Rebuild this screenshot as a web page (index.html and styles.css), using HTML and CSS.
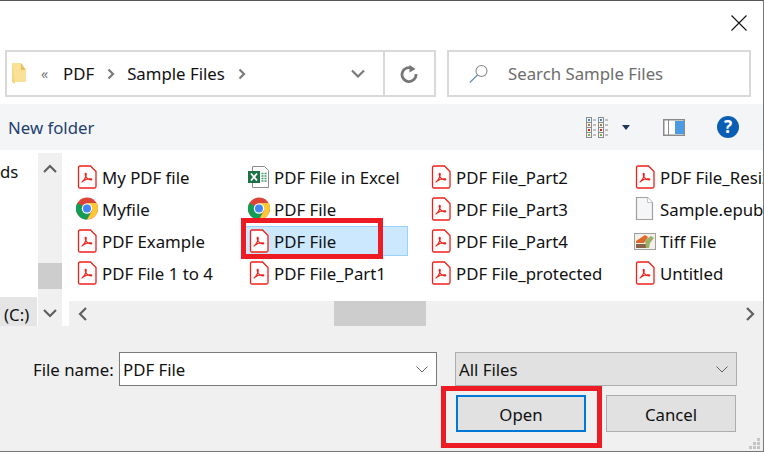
FILE: index.html
```html
<!DOCTYPE html>
<html>
<head>
    <title>Open file</title>
    <link rel="stylesheet" href="styles.css">
</head>
<body>
    <svg class="defs" width="0" height="0">
        <symbol id="pdf" viewBox="0 0 24 24">
            <path d="M4 1h10.500L20 6.500V21.500a1.500 1.500 0 0 1-1.500 1.500H4a1.500 1.500 0 0 1-1.500-1.500v-19A1.500 1.500 0 0 1 4 1z" fill="#fff" stroke="#f0201a" stroke-width="1.300"/>
            <path d="M6 17c1.800-1 3.200-3.500 4-6 .5-1.700.2-2.900-.5-2.700-.7.200-.3 2.500 1 4.200 1.100 1.400 2.600 2.300 4.200 2.400 1.300.1 1.500-.8.500-1-1.800-.4-5.500.4-7.700 1.800-.9.600-1.800 1.600-1.500 1.300z" fill="none" stroke="#f0201a" stroke-width="1.100"/>
        </symbol>
        <symbol id="chrome" viewBox="0 0 24 24">
            <circle cx="11" cy="11.500" r="11" fill="#db4437"/>
            <path d="M11 11.500L1.400 17A11 11 0 0 1 1.500 6z" fill="#0f9d58"/>
            <path d="M11 11.500L1.400 17A11 11 0 0 0 11 22.500l5.500-11z" fill="#0f9d58"/>
            <path d="M11 6h9.500A11 11 0 0 1 11 22.500l5.200-9z" fill="#fcc934"/>
            <circle cx="11" cy="11.500" r="5.200" fill="#fff"/>
            <circle cx="11" cy="11.500" r="4" fill="#4285f4"/>
        </symbol>
        <symbol id="excel" viewBox="0 0 24 24">
            <path d="M4.500 1.500h12l4 4v17h-16z" fill="#fff" stroke="#8c8c8c"/>
            <rect x="0" y="6" width="12" height="12" fill="#1e7145"/>
            <path d="M3 8.500l6 7M9 8.500l-6 7" stroke="#fff" stroke-width="1.800"/>
            <path d="M13.500 8.500h2M16.500 8.500h2M13.500 11h2M16.500 11h2M13.500 13.500h2M16.500 13.500h2M13.500 16h2M16.500 16h2" stroke="#3f9a6b" stroke-width="1.500"/>
        </symbol>
    </svg>

    <div class="dialog">
        <div class="titlebar">
            <svg class="close" width="16" height="16" viewBox="0 0 16 16"><path d="M.5.500l15 15M15.500.500l-15 15" stroke="#111" stroke-width="1.100"/></svg>
        </div>

        <div class="navrow">
            <div class="address">
                <svg class="folder" width="15" height="21" viewBox="0 0 15 21">
                    <path d="M0 0h9v7h5v12H3v2l-3-2z" fill="#f5d67e"/>
                    <path d="M0 0h8.500l.5 7h5v12H3z" fill="#fbe6a4" opacity=".7"/>
                    <path d="M9 0v7h5" fill="#e8bf5c"/>
                </svg>
                <span class="crumb-more">«</span>
                <span class="crumb">PDF</span>
                <svg class="chev" width="8" height="12" viewBox="0 0 8 12"><path d="M1.500 1.500L6 6l-4.500 4.500" fill="none" stroke="#7a7a7a" stroke-width="2.200"/></svg>
                <span class="crumb">Sample Files</span>
                <svg class="chev" width="8" height="12" viewBox="0 0 8 12"><path d="M1.500 1.500L6 6l-4.500 4.500" fill="none" stroke="#7a7a7a" stroke-width="2.200"/></svg>
                <svg class="addr-drop" width="14" height="9" viewBox="0 0 14 9"><path d="M1 1.500l6 6 6-6" fill="none" stroke="#7a7a7a" stroke-width="2.200"/></svg>
                <div class="refresh">
                    <svg width="18" height="18" viewBox="0 0 18 18"><path d="M12.500 3.500A7 7 0 1 0 16 9" fill="none" stroke="#767676" stroke-width="2.800"/><path d="M9.500 0v7.500l6-3.500z" fill="#767676"/></svg>
                </div>
            </div>
            <div class="search">
                <svg width="20" height="19" viewBox="0 0 20 19"><circle cx="12.500" cy="7" r="5.500" fill="none" stroke="#8a8a8a" stroke-width="1.100"/><path d="M8.500 11L.8 18.500" stroke="#6f8fb3" stroke-width="1.300"/></svg>
                <span>Search Sample Files</span>
            </div>
        </div>

        <div class="toolbar">
            <span class="new-folder">New folder</span>
            <svg class="view-icon" width="23" height="21" viewBox="0 0 23 21">
                <g fill="none" stroke="#8a8a8a">
                    <rect x=".5" y=".5" width="5" height="5"/><rect x=".5" y="5.500" width="5" height="5"/><rect x=".5" y="10.500" width="5" height="5"/><rect x=".5" y="15.500" width="5" height="5"/>
                    <rect x="12.500" y=".5" width="5" height="5"/><rect x="12.500" y="5.500" width="5" height="5"/><rect x="12.500" y="10.500" width="5" height="5"/><rect x="12.500" y="15.500" width="5" height="5"/>
                    <path d="M7 3h3M7 8h3M7 13h3M7 18h3M19 3h3M19 8h3M19 13h3M19 18h3"/>
                </g>
                <rect x="2" y="2" width="2" height="2" fill="#3b8ac4"/><rect x="2" y="7" width="2" height="2" fill="#a67c3d"/><rect x="2" y="12" width="2" height="2" fill="#c8281e"/><rect x="2" y="17" width="2" height="2" fill="#7fae3c"/>
                <rect x="14" y="2" width="2" height="2" fill="#3b8ac4"/><rect x="14" y="7" width="2" height="2" fill="#a67c3d"/><rect x="14" y="12" width="2" height="2" fill="#c8281e"/><rect x="14" y="17" width="2" height="2" fill="#7fae3c"/>
            </svg>
            <span class="view-drop"></span>
            <svg class="pane-icon" width="22" height="17" viewBox="0 0 22 17">
                <rect x=".75" y=".75" width="20.500" height="15.500" fill="#fff" stroke="#8a8a8a" stroke-width="1.500"/>
                <rect x="12" y="2" width="9" height="13" fill="#4a9be4"/>
                <path d="M5.500 1v15" stroke="#8a8a8a"/>
            </svg>
            <span class="help">?</span>
        </div>

        <div class="main">
            <div class="tree">
                <span>ds</span>
                <span class="tree-drive">(C:)</span>
            </div>
            <div class="vscroll">
                <svg class="vscroll-up" width="14" height="9" viewBox="0 0 14 9"><path d="M1 8l6-6 6 6" fill="none" stroke="#606060" stroke-width="2.200"/></svg>
                <div class="vscroll-thumb"></div>
                <svg class="vscroll-down" width="14" height="9" viewBox="0 0 14 9"><path d="M1 1l6 6 6-6" fill="none" stroke="#606060" stroke-width="2.200"/></svg>
            </div>
            <div class="list-wrap">
                <div class="files">
                    <div class="file"><svg class="ico"><use href="#pdf"/></svg><span>My PDF file</span></div>
                    <div class="file"><svg class="ico"><use href="#excel"/></svg><span>PDF File in Excel</span></div>
                    <div class="file"><svg class="ico"><use href="#pdf"/></svg><span>PDF File_Part2</span></div>
                    <div class="file"><svg class="ico"><use href="#pdf"/></svg><span>PDF File_Resized</span></div>

                    <div class="file"><svg class="ico"><use href="#chrome"/></svg><span>Myfile</span></div>
                    <div class="file"><svg class="ico"><use href="#chrome"/></svg><span>PDF File</span></div>
                    <div class="file"><svg class="ico"><use href="#pdf"/></svg><span>PDF File_Part3</span></div>
                    <div class="file">
                        <svg class="ico" viewBox="0 0 24 24"><path d="M2.500.500h11l5 5v17h-16z" fill="#f5f6f7" stroke="#a0a0a0" stroke-width="1.200"/><path d="M13.500.500v5h5" fill="#fff" stroke="#c4c4c4"/></svg>
                        <span>Sample.epub</span>
                    </div>

                    <div class="file"><svg class="ico"><use href="#pdf"/></svg><span>PDF Example</span></div>
                    <div class="file selected"><svg class="ico"><use href="#pdf"/></svg><span>PDF File</span></div>
                    <div class="file"><svg class="ico"><use href="#pdf"/></svg><span>PDF File_Part4</span></div>
                    <div class="file">
                        <svg class="ico" viewBox="0 0 24 24">
                            <rect x=".5" y="4.500" width="21" height="16" fill="#f4f1ea" stroke="#a0a0a0"/>
                            <path d="M2 12l9-6 3 2-4 6H2z" fill="#e0682a"/>
                            <path d="M2 15h11v4H2z" fill="#8a6248"/>
                            <path d="M11 11l6-4 3 2-4 5-1 5h-3z" fill="#9cb06a"/>
                        </svg>
                        <span>Tiff File</span>
                    </div>

                    <div class="file"><svg class="ico"><use href="#pdf"/></svg><span>PDF File 1 to 4</span></div>
                    <div class="file"><svg class="ico"><use href="#pdf"/></svg><span>PDF File_Part1</span></div>
                    <div class="file"><svg class="ico"><use href="#pdf"/></svg><span>PDF File_protected</span></div>
                    <div class="file"><svg class="ico"><use href="#pdf"/></svg><span>Untitled</span></div>
                </div>
                <div class="hscroll">
                    <svg class="hscroll-left" width="9" height="14" viewBox="0 0 9 14"><path d="M8 1L2 7l6 6" fill="none" stroke="#606060" stroke-width="2.200"/></svg>
                    <div class="hscroll-thumb"></div>
                    <svg class="hscroll-right" width="9" height="14" viewBox="0 0 9 14"><path d="M1 1l6 6-6 6" fill="none" stroke="#606060" stroke-width="2.200"/></svg>
                </div>
            </div>
        </div>

        <div class="footer">
            <div class="footer-row">
                <label class="name-label">File name:</label>
                <div class="combo name-combo">
                    <span>PDF File</span>
                    <svg width="12" height="7" viewBox="0 0 12 7"><path d="M.5.500l5.500 5.500 5.500-5.500" fill="none" stroke="#606060"/></svg>
                </div>
                <div class="combo type-combo">
                    <span>All Files</span>
                    <svg width="12" height="7" viewBox="0 0 12 7"><path d="M.5.500l5.500 5.500 5.500-5.500" fill="none" stroke="#606060"/></svg>
                </div>
            </div>
            <div class="footer-row buttons">
                <button class="btn btn-open">Open</button>
                <button class="btn">Cancel</button>
            </div>
            <svg class="grip" width="12" height="12" viewBox="0 0 12 12" fill="#c4c4c4">
                <rect x="8" y="0" width="3" height="3"/><rect x="4" y="4" width="3" height="3"/><rect x="8" y="4" width="3" height="3"/>
                <rect x="0" y="8" width="3" height="3"/><rect x="4" y="8" width="3" height="3"/><rect x="8" y="8" width="3" height="3"/>
            </svg>
        </div>

        <!-- red callouts drawn on top of the dialog -->
        <div class="callout callout-file"></div>
        <div class="callout callout-open"></div>
    </div>
</body>
</html>
```

FILE: styles.css
```css
* {
    box-sizing: border-box;
}
body {
    margin: 0;
    font-family: "Noto Sans", sans-serif;
    font-size: 16.8px;
    color: #111;
}
.defs {
    position: absolute;
}
.dialog {
    position: relative;
    width: 764px;
    height: 452px;
    display: flex;
    flex-direction: column;
    background-color: #fff;
    border-top: 1px solid #555;
    border-bottom: 1px solid #777;
    border-right: 1px solid #777;
    overflow: hidden;
}

.titlebar {
    height: 49px;
    flex: none;
    padding: 14px 0 0 731px;
}
.close {
    display: block;
}

.navrow {
    flex: none;
    height: 47px;
    display: flex;
    padding-left: 5px;
}
.address {
    width: 431px;
    display: flex;
    align-items: center;
    border: 2px solid #d9d9d9;
    padding-left: 5px;
}
.folder {
    margin-right: 14px;
}
.crumb-more {
    color: #777;
    width: 22px;
    font-size: 14px;
}
.chev {
    margin: 0 12px 0 13px;
}
.addr-drop {
    margin-left: 93px;
}
.refresh {
    margin-left: 18px;
    height: 100%;
    flex: 1;
    display: flex;
    align-items: center;
    padding-left: 15px;
    border-left: 2px solid #d9d9d9;
}
.search {
    width: 304px;
    margin-left: 11px;
    display: flex;
    align-items: center;
    gap: 19px;
    border: 2px solid #d9d9d9;
    padding-left: 20px;
    color: #6d6d6d;
}

.toolbar {
    flex: none;
    margin-top: 7px;
    height: 46px;
    display: flex;
    align-items: center;
    background-color: #f4f5f7;
    padding-left: 8px;
}
.new-folder {
    width: 578px;
    color: #1f3f6f;
}
.view-icon {
    margin-right: 13px;
}
.view-drop {
    width: 0;
    height: 0;
    border-left: 4px solid transparent;
    border-right: 4px solid transparent;
    border-top: 5px solid #1f3557;
    margin-right: 33px;
}
.pane-icon {
    margin-right: 32px;
}
.help {
    width: 22px;
    height: 22px;
    border-radius: 50%;
    background-color: #0a5fb4;
    color: #fff;
    font-weight: bold;
    font-size: 17px;
    line-height: 22px;
    text-align: center;
}

.main {
    flex: none;
    margin-top: 3px;
    height: 173px;
    display: flex;
}
.tree {
    width: 38px;
    flex: none;
    display: flex;
    flex-direction: column;
    justify-content: space-between;
    padding-top: 7px;
    overflow: hidden;
}
.tree-drive {
    background-color: #e5e5e5;
    height: 29px;
    line-height: 36px;
    padding-left: 4px;
    margin-right: 1px;
}
.vscroll {
    width: 24px;
    flex: none;
    display: flex;
    flex-direction: column;
    align-items: center;
    background-color: #f0f0f0;
    padding-top: 11px;
}
.vscroll-thumb {
    width: 100%;
    height: 26px;
    margin-top: 90px;
    background-color: #cdcdcd;
}
.vscroll-down {
    margin-top: 20px;
}
.list-wrap {
    width: 694px;
    margin-left: 7px;
    flex: none;
    display: flex;
    flex-direction: column;
    overflow: hidden;
}
.files {
    flex: 1;
    display: grid;
    grid-template-columns: 172px 182px 204px 200px;
    grid-auto-rows: 30px;
    row-gap: 2px;
    padding: 9px 0 0 4px;
}
.file {
    display: flex;
    align-items: center;
    gap: 2px;
    padding-left: 3px;
    white-space: nowrap;
}
.file span {
    padding-top: 1px;
}
.ico {
    width: 24px;
    height: 24px;
    flex: none;
}
.selected {
    width: 163px;
    background-color: #cce8ff;
    border: 1px solid #99d1ff;
    padding-left: 2px;
}
.hscroll {
    flex: none;
    height: 25px;
    display: flex;
    align-items: center;
    background-color: #f0f0f0;
    padding-left: 9px;
}
.hscroll-thumb {
    width: 92px;
    height: 100%;
    margin-left: 247px;
    background-color: #cdcdcd;
}
.hscroll-right {
    margin-left: 320px;
}

.footer {
    position: relative;
    flex: 1;
    background-color: #f0f0f0;
    padding-top: 26px;
}
.footer-row {
    display: flex;
    align-items: center;
    padding-left: 33px;
}
.name-label {
    width: 86px;
}
.combo {
    height: 34px;
    display: flex;
    align-items: center;
    justify-content: space-between;
    padding: 0 8px 0 3px;
}
.combo span {
    padding-top: 1px;
}
.name-combo {
    width: 318px;
    background-color: #fff;
    border: 1px solid #7a7a7a;
}
.type-combo {
    width: 282px;
    margin-left: 18px;
    background-color: #e1e1e1;
    border: 1px solid #adadad;
}
.buttons {
    margin-top: 9px;
    padding-left: 456px;
    gap: 20px;
}
.btn {
    width: 130px;
    height: 37px;
    padding: 1px 0 0;
    font: inherit;
    color: inherit;
    background-color: #e1e1e1;
    border: 1px solid #adadad;
}
.btn-open {
    border: 2px solid #0078d7;
}
.grip {
    position: absolute;
    right: 2px;
    bottom: 1px;
}

.callout {
    position: absolute;
    border: 5px solid #ed1c24;
}
.callout-file {
    left: 241px;
    top: 217px;
    width: 142px;
    height: 41px;
}
.callout-open {
    left: 441px;
    top: 385px;
    width: 161px;
    height: 62px;
}
```
